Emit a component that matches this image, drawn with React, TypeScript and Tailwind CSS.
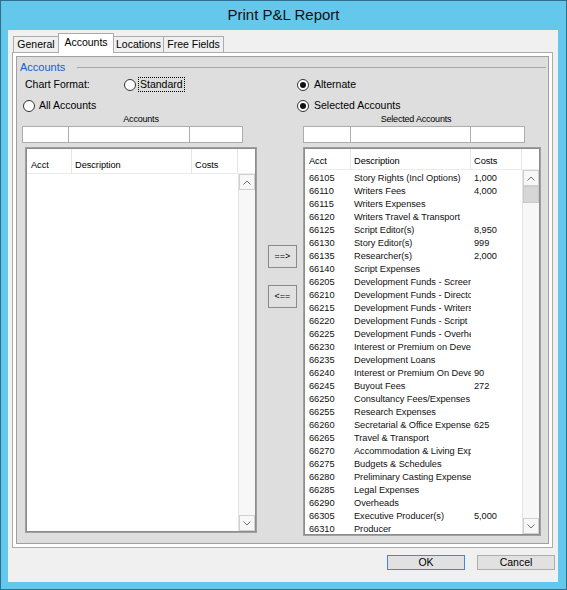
import React from "react";

const rows: [string, string, string][] = [
  ["66105", "Story Rights (Incl Options)", "1,000"],
  ["66110", "Writers Fees", "4,000"],
  ["66115", "Writers Expenses", ""],
  ["66120", "Writers Travel & Transport", ""],
  ["66125", "Script Editor(s)", "8,950"],
  ["66130", "Story Editor(s)", "999"],
  ["66135", "Researcher(s)", "2,000"],
  ["66140", "Script Expenses", ""],
  ["66205", "Development Funds - Screenplay", ""],
  ["66210", "Development Funds - Director", ""],
  ["66215", "Development Funds - Writers", ""],
  ["66220", "Development Funds - Script", ""],
  ["66225", "Development Funds - Overheads", ""],
  ["66230", "Interest or Premium on Development", ""],
  ["66235", "Development Loans", ""],
  ["66240", "Interest or Premium On Development", "90"],
  ["66245", "Buyout Fees", "272"],
  ["66250", "Consultancy Fees/Expenses", ""],
  ["66255", "Research Expenses", ""],
  ["66260", "Secretarial & Office Expenses", "625"],
  ["66265", "Travel & Transport", ""],
  ["66270", "Accommodation & Living Expenses", ""],
  ["66275", "Budgets & Schedules", ""],
  ["66280", "Preliminary Casting Expenses", ""],
  ["66285", "Legal Expenses", ""],
  ["66290", "Overheads", ""],
  ["66305", "Executive Producer(s)", "5,000"],
  ["66310", "Producer", ""],
];

function Radio({ checked }: { checked?: boolean }) {
  return (
    <span className="w-[12px] h-[12px] rounded-full border border-[#333] bg-white flex items-center justify-center shrink-0">
      {checked && <span className="w-[6px] h-[6px] rounded-full bg-[#111]" />}
    </span>
  );
}

function Chevron({ down }: { down?: boolean }) {
  return (
    <svg width="8" height="5" viewBox="0 0 8 5">
      <polyline
        points={down ? "0.5,0.5 4,4 7.5,0.5" : "0.5,4.5 4,1 7.5,4.5"}
        fill="none"
        stroke="#707070"
        strokeWidth="1"
      />
    </svg>
  );
}

function ScrollBar({ thumb }: { thumb?: boolean }) {
  return (
    <div className="w-[17px] flex flex-col bg-[#f7f7f7] border-l border-[#e3e3e3]">
      <div className="h-[16px] border border-[#d0d0d0] flex items-center justify-center bg-[#f7f7f7]">
        <Chevron />
      </div>
      {thumb && <div className="h-[17px] bg-[#d6d6d6] border border-[#cacaca]" />}
      <div className="flex-1" />
      <div className="h-[16px] border border-[#d0d0d0] flex items-center justify-center bg-[#f7f7f7]">
        <Chevron down />
      </div>
    </div>
  );
}

function ListView({
  widths,
  headH,
  data,
  thumb,
}: {
  widths: [number, number, number];
  headH: number;
  data: [string, string, string][];
  thumb?: boolean;
}) {
  return (
    <div className="h-full border border-[#a0a0a0] bg-[#f4f4f4]">
      <div className="h-full border border-[#8c8c8c] bg-white flex flex-col overflow-hidden">
        <div className="flex border-b border-[#ececec] text-[9.25px] tracking-[-0.05px]" style={{ height: headH }}>
          <div className="flex items-end pl-[4px] border-r border-[#e5e5e5]" style={{ width: widths[0] }}>Acct</div>
          <div className="flex items-end pl-[3px] border-r border-[#e5e5e5]" style={{ width: widths[1] }}>Description</div>
          <div className="flex items-end pl-[3px] border-r border-[#e5e5e5]" style={{ width: widths[2] }}>Costs</div>
          <div className="flex-1" />
        </div>
        <div className="flex flex-1 min-h-0">
          <div className="flex-1 overflow-hidden pt-[2px] text-[9.25px] tracking-[-0.05px] text-[#111]">
            {data.map(([a, d, c]) => (
              <div key={a} className="h-[13px] flex items-center whitespace-nowrap">
                <div className="pl-[4px] overflow-hidden" style={{ width: widths[0] }}>{a}</div>
                <div className="pl-[3px] pr-[3px] overflow-hidden" style={{ width: widths[1] }}>{d}</div>
                <div className="pl-[3px] overflow-hidden" style={{ width: widths[2] }}>{c}</div>
              </div>
            ))}
          </div>
          <ScrollBar thumb={thumb} />
        </div>
      </div>
    </div>
  );
}

function Filters({ widths }: { widths: number[] }) {
  return (
    <div className="flex h-[17px]">
      {widths.map((w, i) => (
        <div key={i} className={`h-full bg-white border border-[#adadad] ${i > 0 ? "-ml-px" : ""}`} style={{ width: w }} />
      ))}
    </div>
  );
}

function Tab({ label, width, active }: { label: string; width: number; active?: boolean }) {
  return (
    <div
      className={
        active
          ? "h-[20px] -mb-px -ml-px z-10 bg-white border border-b-0 border-[#acacac] flex items-center justify-center pb-[2px]"
          : "h-[16px] -ml-px first:ml-0 bg-[#f0f0f0] border border-b-0 border-[#acacac] flex items-center justify-center"
      }
      style={{ width }}
    >
      {label}
    </div>
  );
}

function WinButton({ label, def }: { label: string; def?: boolean }) {
  return (
    <div
      className={`w-[78px] h-[15px] bg-[#e1e1e1] border flex items-center justify-center text-[10.5px] ${
        def ? "border-[#3c8ad8]" : "border-[#adadad]"
      }`}
    >
      {label}
    </div>
  );
}

export default function App() {
  return (
    <div className="w-[567px] h-[590px] bg-[#63c8eb] border border-[#2e6f8e] flex flex-col font-['Liberation_Sans',Arial,sans-serif] text-black">
      {/* title bar */}
      <div className="h-[29px] shrink-0 flex items-center justify-center text-[15px] text-[#111]">
        Print P&amp;L Report
      </div>

      {/* client area */}
      <div className="flex-1 ml-[7px] mr-[8px] mb-[7px] bg-[#f0f0f0] flex flex-col">
        {/* tabs */}
        <div className="h-[22px] flex items-end pl-[5px] text-[10.5px]">
          <Tab label="General" width={46} />
          <Tab label="Accounts" width={56} active />
          <Tab label="Locations" width={51} />
          <Tab label="Free Fields" width={61} />
        </div>

        {/* tab page */}
        <div className="ml-[4px] w-[541px] h-[496px] border border-[#acacac] bg-white p-[3px]">
          <div className="h-full border border-[#a0a0a0] bg-[#dedede] flex flex-col text-[10.5px]">
            {/* group header */}
            <div className="mt-[3px] h-[14px] flex items-center">
              <span className="pl-[3px] text-[#1560c8] text-[11px]">Accounts</span>
              <div className="flex-1 h-px bg-[#a8a8a8] ml-[12px] mr-[2px]" />
            </div>

            {/* chart format */}
            <div className="mt-[3px] h-[15px] flex items-center pl-[5px]">
              <div className="w-[235px] flex items-center">
                <span className="ml-[3px] w-[99px]">Chart Format:</span>
                <Radio />
                <span className="ml-[2px] px-[1px] h-[15px] flex items-center border border-dotted border-black">Standard</span>
              </div>
              <div className="w-[40px]" />
              <div className="flex items-center gap-[5px]">
                <Radio checked />
                <span>Alternate</span>
              </div>
            </div>

            {/* account selection */}
            <div className="mt-[6px] h-[15px] flex items-center pl-[5px]">
              <div className="w-[235px] flex items-center gap-[4px] pl-[1px]">
                <Radio />
                <span>All Accounts</span>
              </div>
              <div className="w-[40px]" />
              <div className="flex items-center gap-[5px]">
                <Radio checked />
                <span>Selected Accounts</span>
              </div>
            </div>

            {/* captions */}
            <div className="mt-[2px] h-[10px] flex items-center pl-[5px] text-[9px] tracking-[-0.2px]">
              <div className="w-[235px] pl-[3px]">
                <div className="w-[232px] text-center">Accounts</div>
              </div>
              <div className="w-[40px]" />
              <div className="w-[232px] pl-[6px] text-center">Selected Accounts</div>
            </div>

            {/* filter boxes */}
            <div className="mt-[1px] flex pl-[5px]">
              <div className="w-[235px]">
                <Filters widths={[47, 122, 54]} />
              </div>
              <div className="w-[40px]" />
              <div className="pl-[6px]">
                <Filters widths={[48, 121, 55]} />
              </div>
            </div>

            {/* lists */}
            <div className="mt-[4px] flex items-start pl-[5px]">
              <div className="w-[235px] pl-[3px]">
                <div className="w-[232px] h-[386px]">
                  <ListView widths={[45, 120, 46]} headH={25} data={[]} />
                </div>
              </div>
              <div className="w-[40px] pl-[11px] flex flex-col text-[9px]">
                <div className="mt-[98px] w-[29px] h-[23px] bg-[#e1e1e1] border border-[#8a8a8a] flex items-center justify-center">==&gt;</div>
                <div className="mt-[17px] w-[29px] h-[23px] bg-[#e1e1e1] border border-[#8a8a8a] flex items-center justify-center">&lt;==</div>
              </div>
              <div className="pl-[6px]">
                <div className="w-[238px] h-[389px]">
                  <ListView widths={[46, 120, 51]} headH={21} data={rows} thumb />
                </div>
              </div>
            </div>
          </div>
        </div>

        {/* dialog buttons */}
        <div className="mt-[7px] flex justify-end gap-[12px] pr-[3px]">
          <WinButton label="OK" def />
          <WinButton label="Cancel" />
        </div>
      </div>
    </div>
  );
}
